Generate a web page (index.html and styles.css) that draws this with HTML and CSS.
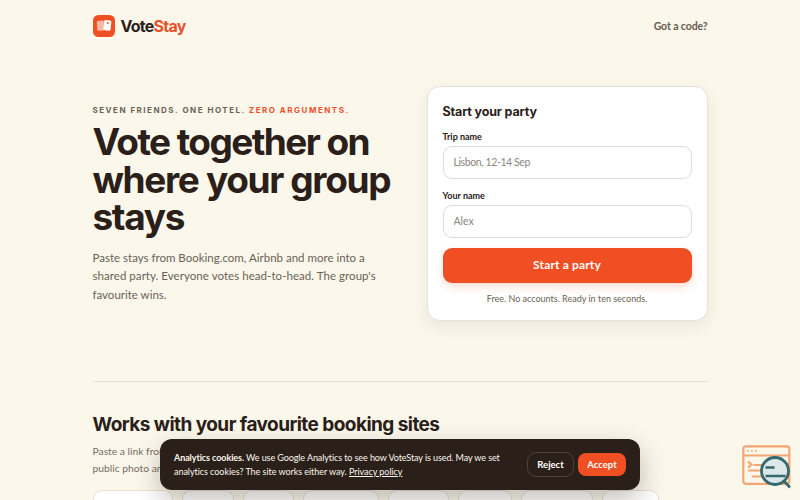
FILE: index.html
```
<!DOCTYPE html>
<html lang="en">
<head>
    <meta charset="UTF-8">
    <meta name="viewport" content="width=device-width, initial-scale=1.0">
    <title>VoteStay</title>
    <link rel="stylesheet" href="styles.css">
</head>
<body>
    <div class="container">
        <header class="header">
            <a class="logo" href="#">
                <svg class="logo-icon" viewBox="0 0 22 22">
                    <rect width="22" height="22" rx="5.5" fill="#f04e23"/>
                    <rect x="4" y="5.8" width="7" height="9.8" rx="1" fill="#f9b7a2" transform="rotate(-4 7 10)"/>
                    <rect x="10.8" y="5.2" width="7.2" height="10.2" rx="1.4" fill="#fff" transform="rotate(6 14 10)"/>
                    <circle cx="14.8" cy="8" r="1" fill="#f04e23"/>
                </svg>
                <span class="logo-text">Vote<span class="accent">Stay</span></span>
            </a>
            <a class="code-link" href="#">Got a code?</a>
        </header>

        <section class="hero">
            <div class="hero-text">
                <p class="eyebrow">Seven friends. One hotel. <span class="accent">Zero arguments.</span></p>
                <h1><span class="line-1">Vote together on</span><br>where your group<br>stays</h1>
                <p class="lead">Paste stays from Booking.com, Airbnb and more into a<br><span class="lead-2">shared party. Everyone votes head-to-head. The group's</span><br>favourite wins.</p>
            </div>
            <form class="card">
                <h2>Start your party</h2>
                <label for="trip">Trip name</label>
                <input type="text" id="trip" placeholder="Lisbon, 12-14 Sep">
                <label for="name">Your name</label>
                <input type="text" id="name" placeholder="Alex">
                <button class="start" type="button">Start a party</button>
                <p class="note">Free. No accounts. Ready in ten seconds.</p>
            </form>
        </section>

        <section class="sites">
            <h2>Works with your favourite booking sites</h2>
            <p>Paste a link from any of these sites and we fill in the<br>public photo and the name of the stay for you.</p>
            <div class="site-list">
                <span class="site"></span>
                <span class="site"></span>
                <span class="site"></span>
                <span class="site"></span>
                <span class="site"></span>
                <span class="site"></span>
                <span class="site"></span>
                <span class="site"></span>
            </div>
        </section>
    </div>

    <div class="cookies">
        <p><strong>Analytics cookies.</strong> We use Google Analytics to see how VoteStay is used. May we set<br><span class="cookie-2">analytics cookies? The site works either way. <a href="#">Privacy policy</a></span></p>
        <button class="reject" type="button">Reject</button>
        <button class="accept" type="button">Accept</button>
    </div>

    <svg class="inspect" viewBox="0 0 50 44" fill="none">
        <g stroke="#f3a673" stroke-width="2.2">
            <rect x="1.3" y="1.300" width="46" height="37.500" rx="2.500"/>
            <path d="M1 10.500H47M6 16.500l3.500 3-3.500 3M11.500 20h10M6 25.500h14M10 31.500h12"/>
            <path d="M5 6h1.800M9 6h1.800M13 6h1.800" stroke-width="1.600"/>
        </g>
        <circle cx="33" cy="26" r="13.500" fill="#dce7e9" stroke="#34696d" stroke-width="2.800"/>
        <path d="M23.500 22.500h9M23.500 31h20M42.500 36.500l5.500 6" stroke="#34696d" stroke-width="2.600"/>
    </svg>
</body>
</html>
```
FILE: styles.css
```
* {
    margin: 0;
    padding: 0;
    box-sizing: border-box;
}
body {
    height: 500px;
    overflow: hidden;
    background: #fbf7eb;
    color: #2a2019;
    font-family: Lato, sans-serif;
}
.container {
    width: 615px;
    margin: 0 auto;
}
a {
    color: inherit;
    text-decoration: none;
}
.accent {
    color: #e9512d;
}
.header {
    display: flex;
    justify-content: space-between;
    align-items: center;
    height: 52px;
}
.logo {
    display: flex;
    align-items: center;
    gap: 6px;
}
.logo-icon {
    width: 22px;
    height: 22px;
}
.logo-text {
    font: bold 16px Inter, sans-serif;
    letter-spacing: -0.75px;
}
.code-link {
    font-size: 10.5px;
    font-weight: bold;
    letter-spacing: -0.1px;
    color: #665d52;
}
.hero {
    display: grid;
    grid-template-columns: 300px 281px;
    justify-content: space-between;
    align-items: center;
    height: 330px;
    padding-bottom: 27px;
    border-bottom: 1px solid #e5e0d4;
}
.hero-text {
    padding-top: 2px;
    white-space: nowrap;
}
.eyebrow {
    margin-bottom: 7px;
    font: bold 8px/12px Inter, sans-serif;
    letter-spacing: 1.5px;
    text-transform: uppercase;
    color: #6b6257;
}
h1 {
    font: bold 37px/37.5px Inter, sans-serif;
    letter-spacing: -1.35px;
}
.line-1 {
    letter-spacing: -1.57px;
}
.lead {
    margin-top: 13px;
    font-size: 11.5px;
    line-height: 18.5px;
    color: #6b6257;
}
.lead-2 {
    letter-spacing: 0.05px;
}
.card {
    height: 235px;
    padding: 16px 15px;
    background: #fff;
    border: 1px solid #e7e3da;
    border-radius: 13px;
    box-shadow: 0 6px 16px rgba(42, 32, 25, 0.08);
}
.card h2 {
    margin-bottom: 11px;
    font: bold 12.5px/17px Inter, sans-serif;
    letter-spacing: -0.15px;
}
label {
    display: block;
    margin-bottom: 3px;
    font-size: 9px;
    line-height: 12px;
    font-weight: bold;
}
input {
    display: block;
    width: 100%;
    height: 33px;
    margin-bottom: 11px;
    padding: 0 10px;
    border: 1px solid #dddcdd;
    border-radius: 9px;
    font: 10.5px Lato, sans-serif;
    letter-spacing: -0.4px;
}
#name {
    margin-bottom: 10px;
    letter-spacing: 0;
}
input::placeholder {
    color: #8b867f;
}
button {
    border: none;
    font-family: Lato, sans-serif;
    font-weight: bold;
    color: #fff;
}
.start {
    width: 100%;
    height: 35px;
    padding-bottom: 2px;
    border-radius: 9px;
    background: #f04e23;
    box-shadow: 0 4px 9px rgba(240, 78, 35, 0.2);
    font-size: 12px;
    letter-spacing: 0.15px;
}
.note {
    margin-top: 9px;
    font-size: 9px;
    line-height: 13px;
    text-align: center;
    color: #6b6257;
}
.sites {
    padding-top: 31px;
}
.sites h2 {
    font: bold 19px/24px Inter, sans-serif;
    letter-spacing: -0.55px;
}
.sites p {
    margin-top: 6px;
    font-size: 10.3px;
    line-height: 16.5px;
    color: #766d62;
}
.site-list {
    display: flex;
    gap: 9px;
    margin-top: 14px;
}
.site {
    width: 52px;
    height: 30px;
    border: 1px solid #e5e0d4;
    border-radius: 9px;
    background: #fff;
}
.site:nth-child(1) { width: 80px; }
.site:nth-child(3) { width: 51px; }
.site:nth-child(4) { width: 76px; }
.site:nth-child(5) { width: 61px; }
.site:nth-child(6) { width: 54px; }
.site:nth-child(7) { width: 72px; }
.site:nth-child(8) { width: 57px; }
.cookies {
    position: absolute;
    left: 160px;
    top: 439px;
    display: flex;
    align-items: center;
    width: 480px;
    height: 51px;
    padding: 0 14px;
    border-radius: 12px;
    background: #2a2019;
    box-shadow: 0 10px 26px rgba(42, 32, 25, 0.28);
    color: #faf6ec;
}
.cookies p {
    flex: 1;
    font-size: 9px;
    line-height: 14px;
    letter-spacing: -0.09px;
    white-space: nowrap;
}
.cookie-2 {
    letter-spacing: -0.05px;
}
.cookies a {
    text-decoration: underline;
}
.cookies button {
    font-size: 9.5px;
}
.reject {
    width: 47px;
    height: 25px;
    margin-right: 4px;
    border: 1px solid #4b423b;
    border-radius: 9px;
    background: none;
}
.accept {
    width: 48px;
    height: 23px;
    border-radius: 8px;
    background: #f04e23;
}
.inspect {
    position: absolute;
    left: 742px;
    top: 445px;
    width: 50px;
    height: 44px;
}
```
